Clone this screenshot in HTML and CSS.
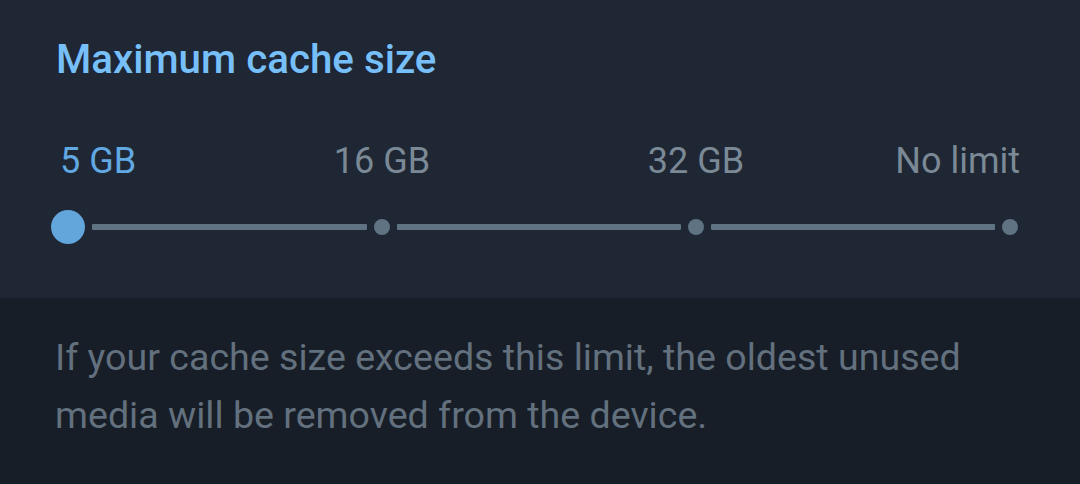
FILE: index.html
```html
<!DOCTYPE html>
<html>
<head>
<meta charset="utf-8">
<link rel="stylesheet" href="styles.css">
</head>
<body>
<section class="panel">
  <h1 class="title">Maximum cache size</h1>
  <div class="labels">
    <span class="label label-first active">5 GB</span>
    <span class="label">16 GB</span>
    <span class="label">32 GB</span>
    <span class="label label-last">No limit</span>
  </div>
  <div class="slider">
    <div class="stop"><span class="thumb"></span></div>
    <div class="seg seg-first"><span class="line"></span></div>
    <div class="stop"><span class="dot"></span></div>
    <div class="seg"><span class="line"></span></div>
    <div class="stop"><span class="dot"></span></div>
    <div class="seg"><span class="line"></span></div>
    <div class="stop"><span class="dot"></span></div>
  </div>
</section>
<section class="info">
  <p class="info-text">If your cache size exceeds this limit, the oldest unused media will be removed from the device.</p>
</section>
</body>
</html>
```
FILE: styles.css
```css
html, body {
  margin: 0;
  padding: 0;
}
body {
  width: 1080px;
  height: 484px;
  overflow: hidden;
  background: #171e27;
  font-family: Roboto, "Noto Sans", sans-serif;
}
.panel {
  box-sizing: border-box;
  height: 298px;
  background: #1e2733;
  padding: 37px 0 0 0;
}
.title {
  margin: 0 0 0 56px;
  font-size: 40.3px;
  line-height: 46px;
  font-weight: 500;
  color: #77bff9;
}
.labels {
  margin: 58px 0 0 68px;
  width: 942px;
  display: grid;
  grid-template-columns: 1fr 2fr 2fr 1fr;
  font-size: 36px;
  line-height: 40px;
  color: #7b8997;
}
.label {
  text-align: center;
  white-space: nowrap;
}
.label-first {
  text-align: left;
  margin-left: -8px;
}
.label-last {
  text-align: right;
  margin-right: -10px;
}
.label.active {
  color: #62a8e2;
}
.slider {
  margin: 29px 0 0 68px;
  width: 942px;
  height: 34px;
  display: grid;
  grid-template-columns: 0 1fr 0 1fr 0 1fr 0;
  align-items: center;
}
.stop {
  width: 0;
  height: 34px;
  display: flex;
  justify-content: center;
  align-items: center;
}
.thumb {
  flex: none;
  width: 34px;
  height: 34px;
  border-radius: 50%;
  background: #62a6dc;
}
.dot {
  flex: none;
  width: 16px;
  height: 16px;
  border-radius: 50%;
  background: #5f7383;
}
.seg {
  display: flex;
  align-items: center;
  padding: 0 15px;
}
.seg-first {
  padding-left: 24px;
}
.line {
  flex: 1;
  height: 6px;
  border-radius: 1px;
  background: #5f7383;
}
.info {
  padding: 30px 0 0 55px;
}
.info-text {
  margin: 0;
  width: 940px;
  font-size: 37.6px;
  line-height: 58px;
  color: #63707e;
}
```
